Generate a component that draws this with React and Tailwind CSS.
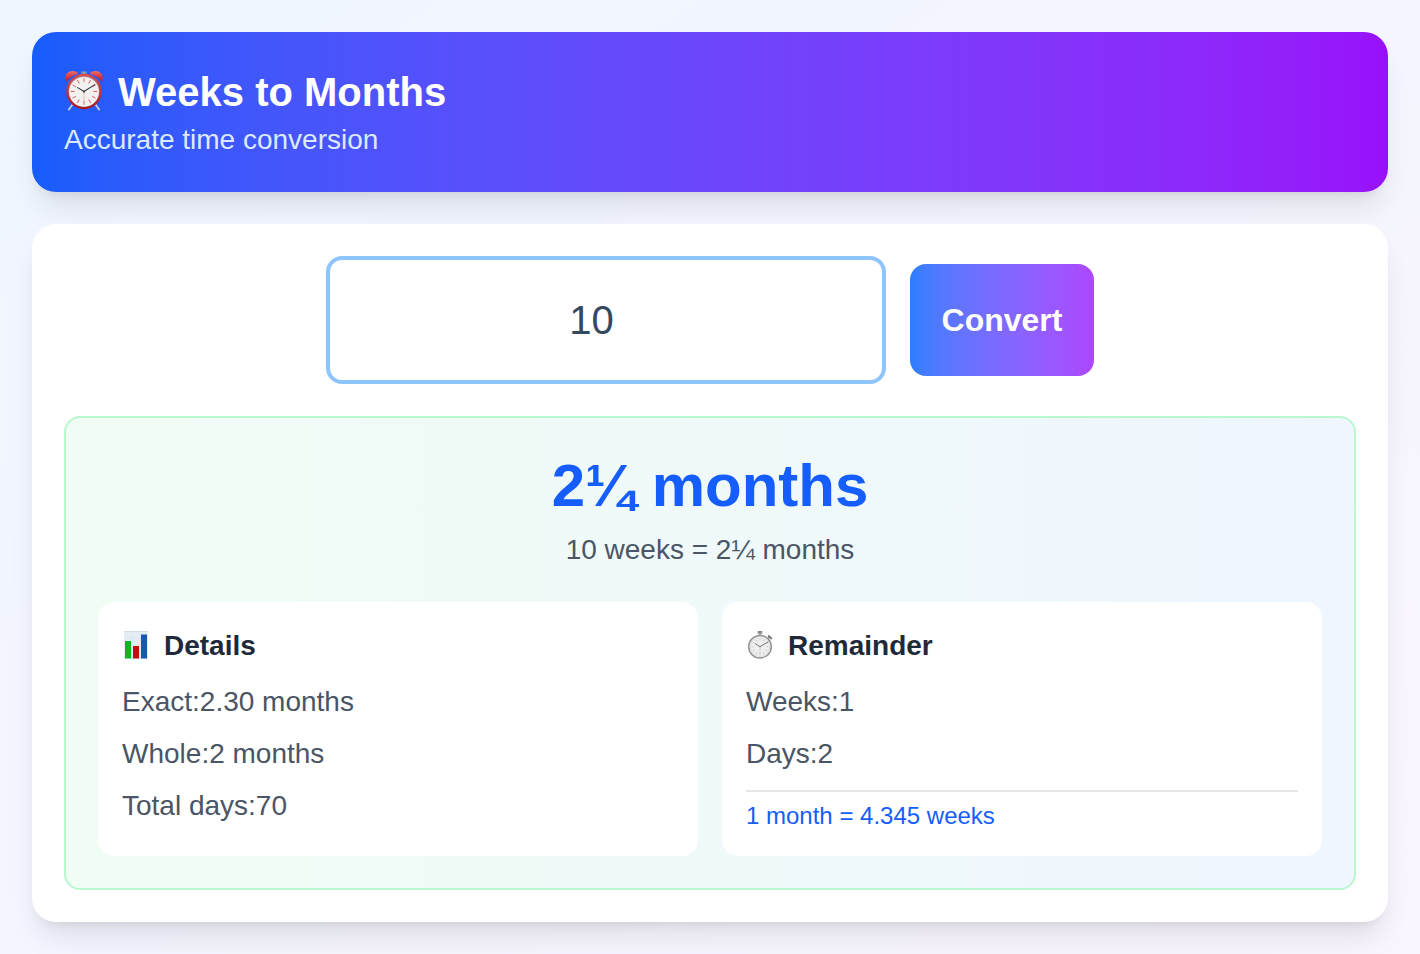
import { useState } from "react";

const DAYS_PER_WEEK = 7;
const WEEKS_PER_MONTH = 4.345;

const CLOCK_TICKS = [0, 30, 60, 90, 120, 150, 180, 210, 240, 270, 300, 330];

function AlarmClock() {
  return (
    <svg viewBox="0 1 40 40" className="size-10 shrink-0 overflow-visible" aria-hidden="true">
      <defs>
        <linearGradient id="alarm-rim" x1="0" y1="0" x2="0" y2="1">
          <stop offset="0" stopColor="#dd4f4c" />
          <stop offset="1" stopColor="#a81620" />
        </linearGradient>
        <linearGradient id="alarm-bell" x1="0" y1="0" x2="0" y2="1">
          <stop offset="0" stopColor="#f2716b" />
          <stop offset="0.5" stopColor="#d93a3c" />
          <stop offset="1" stopColor="#a81e27" />
        </linearGradient>
      </defs>
      <path d="M8.500 33.500 4.800 38.600M31.500 33.500 35.200 38.600" stroke="#c3cad6" strokeWidth="1.800" strokeLinecap="round" />
      <path d="M17.200.500h5.600v2h-5.600zM18.800 2h2.400v2.500h-2.400z" fill="#9199a8" />
      <path d="M2 10.800C-.4 5.800 2.800 0 8.600 0c2.800 0 4.800 1 5.600 2.800C9.300 4 5 6.800 2 10.800z" fill="url(#alarm-bell)" />
      <path d="M38 10.800C40.400 5.800 37.200 0 31.400 0c-2.800 0-4.800 1-5.600 2.800C30.700 4 35 6.800 38 10.800z" fill="url(#alarm-bell)" />
      <circle cx="20" cy="20.500" r="17.700" fill="url(#alarm-rim)" />
      <circle cx="20" cy="20.500" r="15.500" fill="#b58a8c" />
      <circle cx="20" cy="20.800" r="14.900" fill="#f3f1ef" />
      {CLOCK_TICKS.map((angle) => (
        <path key={angle} d="M20 7.200v4" stroke="#de6a66" strokeWidth="1" transform={`rotate(${angle} 20 20.500)`} />
      ))}
      <path d="M20 20.500v13" stroke="#cdc3a4" strokeWidth=".8" />
      <path d="M20.500 20.800 13.600 16.600M19.500 20.800 30.800 13.600" stroke="#3a3d42" strokeWidth="1.100" strokeLinecap="round" />
      <circle cx="20" cy="20.500" r="1" fill="#3a3d42" />
    </svg>
  );
}

function BarChart() {
  return (
    <svg viewBox="0 1 28 28" className="size-7 shrink-0 overflow-visible" aria-hidden="true">
      <path d="M2 0h24v28H2z" fill="#e4edf5" />
      <path d="M2 .500h24" stroke="#d3dde6" strokeWidth="1" />
      <path d="M2 7h24M2 14h24M2 21h24M10 0v28M18 0v28" stroke="#dae4ed" strokeWidth=".6" />
      <path d="M3 10h6v17.500H3z" fill="#12b51c" />
      <path d="M11 15h6v12.500h-6z" fill="#c40d12" />
      <path d="M19 3.500h6v24h-6z" fill="#1458b0" />
    </svg>
  );
}

function Stopwatch() {
  return (
    <svg viewBox="0 1 28 28" className="size-7 shrink-0 overflow-visible" aria-hidden="true">
      <path d="M11.700 0h4.600v2.800h-4.600z" fill="#8c8c8f" />
      <path d="M12.800 2.500h2.400v2.500h-2.400z" fill="#a6a6a8" />
      <path d="m22 7.500 2-2" stroke="#88888b" strokeWidth="1.300" />
      <path d="m22.800 5 2.500 2.500" stroke="#77777a" strokeWidth="1.800" strokeLinecap="round" />
      <circle cx="14" cy="15.700" r="11.300" fill="#efeff0" stroke="#929295" strokeWidth="1.500" />
      <circle cx="14" cy="15.700" r="9.800" fill="none" stroke="#dadadc" strokeWidth=".8" />
      {CLOCK_TICKS.map((angle) => (
        <path key={angle} d="M14 7.200v2" stroke="#bbb" strokeWidth=".7" transform={`rotate(${angle} 14 15.700)`} />
      ))}
      <path d="M14 15.700 9.500 12.700M14 15.700l8-4.700" stroke="#666" strokeWidth=".9" strokeLinecap="round" />
      <path d="M14 15.700v7.500" stroke="#c5c5c5" strokeWidth=".7" />
    </svg>
  );
}

function mixedMonths(months) {
  const quarters = Math.round(months * 4);
  return `${Math.floor(quarters / 4)}${["", "¼", "½", "¾"][quarters % 4]} months`;
}

function convert(weeks) {
  const months = weeks / WEEKS_PER_MONTH;
  const whole = Math.floor(months);
  const leftover = weeks - whole * WEEKS_PER_MONTH;
  const remWeeks = Math.floor(leftover);
  return {
    weeks,
    label: mixedMonths(months),
    exact: months.toFixed(2),
    whole,
    totalDays: weeks * DAYS_PER_WEEK,
    remWeeks,
    remDays: Math.round((leftover - remWeeks) * DAYS_PER_WEEK),
  };
}

function InfoCard({ icon, title, rows, children }) {
  return (
    <section className="rounded-2xl bg-white p-6">
      <h2 className="mb-4 flex items-center gap-3.5 text-[28px] leading-10 font-bold text-gray-800">
        {icon}
        {title}
      </h2>
      <div className="flex flex-col gap-3 text-[28px] leading-10 text-gray-600">
        {rows.map(([name, value]) => (
          <p key={name}>
            <span>{name}:</span>
            <span>{value}</span>
          </p>
        ))}
      </div>
      {children}
    </section>
  );
}

export default function App() {
  const [value, setValue] = useState("10");
  const [result, setResult] = useState(() => convert(10));

  const handleSubmit = (event) => {
    event.preventDefault();
    const weeks = Number(value);
    if (weeks >= 0) setResult(convert(weeks));
  };

  return (
    <div className="flex min-h-screen flex-col gap-8 bg-linear-to-br from-blue-50 to-purple-50 p-8 font-['Liberation_Sans',Arial,sans-serif]">
      <header className="rounded-3xl bg-linear-to-r from-blue-600 to-purple-600 p-8 shadow-[0_20px_30px_-6px_rgba(0,0,0,0.1),0_8px_12px_-8px_rgba(0,0,0,0.1)]">
        <h1 className="flex items-center gap-3.5 text-[40px] leading-14 font-bold text-white">
          <AlarmClock />
          Weeks to Months
        </h1>
        <p className="text-[28px] leading-10 text-blue-100">Accurate time conversion</p>
      </header>

      <main className="rounded-3xl bg-white p-8 shadow-[0_20px_30px_-6px_rgba(0,0,0,0.1),0_8px_12px_-8px_rgba(0,0,0,0.1)]">
        <form onSubmit={handleSubmit} className="mb-8 flex items-center justify-center gap-6">
          <input
            type="number"
            min="0"
            aria-label="Weeks"
            value={value}
            onChange={(event) => setValue(event.target.value)}
            className="h-32 w-full max-w-140 [appearance:textfield] rounded-2xl border-4 border-blue-300 bg-white pr-13 pl-6 text-center text-[40px] text-[#34495e] outline-none [&::-webkit-inner-spin-button]:appearance-none"
          />
          <button
            type="submit"
            className="h-28 rounded-2xl bg-linear-to-r from-blue-500 to-purple-500 px-8 text-[32px] font-bold text-white"
          >
            Convert
          </button>
        </form>

        <div className="rounded-2xl border-2 border-green-200 bg-linear-to-r from-green-50 to-blue-50 p-8">
          <div className="mb-8 text-center">
            <p className="mb-2 text-[60px] leading-[72px] font-bold text-blue-600">{result.label}</p>
            <p className="text-[28px] leading-10 text-gray-600">
              {result.weeks} weeks = {result.label}
            </p>
          </div>

          <div className="grid grid-cols-2 gap-6">
            <InfoCard
              icon={<BarChart />}
              title="Details"
              rows={[
                ["Exact", `${result.exact} months`],
                ["Whole", `${result.whole} months`],
                ["Total days", result.totalDays],
              ]}
            />
            <InfoCard
              icon={<Stopwatch />}
              title="Remainder"
              rows={[
                ["Weeks", result.remWeeks],
                ["Days", result.remDays],
              ]}
            >
              <p className="mt-4 border-t-2 border-gray-200 pt-2 text-[24px] leading-8 text-blue-600">
                1 month = {WEEKS_PER_MONTH} weeks
              </p>
            </InfoCard>
          </div>
        </div>
      </main>
    </div>
  );
}
